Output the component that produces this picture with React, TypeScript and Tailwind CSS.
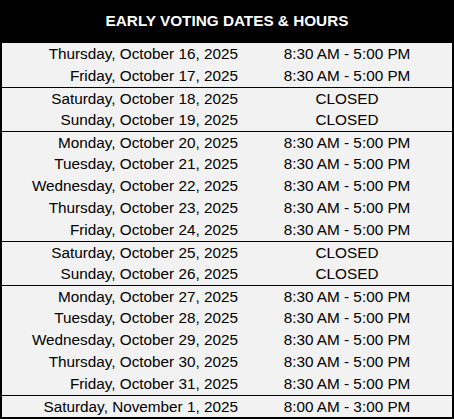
const GROUPS: [string, string][][] = [
  [
    ["Thursday, October 16, 2025", "8:30 AM - 5:00 PM"],
    ["Friday, October 17, 2025", "8:30 AM - 5:00 PM"],
  ],
  [
    ["Saturday, October 18, 2025", "CLOSED"],
    ["Sunday, October 19, 2025", "CLOSED"],
  ],
  [
    ["Monday, October 20, 2025", "8:30 AM - 5:00 PM"],
    ["Tuesday, October 21, 2025", "8:30 AM - 5:00 PM"],
    ["Wednesday, October 22, 2025", "8:30 AM - 5:00 PM"],
    ["Thursday, October 23, 2025", "8:30 AM - 5:00 PM"],
    ["Friday, October 24, 2025", "8:30 AM - 5:00 PM"],
  ],
  [
    ["Saturday, October 25, 2025", "CLOSED"],
    ["Sunday, October 26, 2025", "CLOSED"],
  ],
  [
    ["Monday, October 27, 2025", "8:30 AM - 5:00 PM"],
    ["Tuesday, October 28, 2025", "8:30 AM - 5:00 PM"],
    ["Wednesday, October 29, 2025", "8:30 AM - 5:00 PM"],
    ["Thursday, October 30, 2025", "8:30 AM - 5:00 PM"],
    ["Friday, October 31, 2025", "8:30 AM - 5:00 PM"],
  ],
  [["Saturday, November 1, 2025", "8:00 AM - 3:00 PM"]],
];

export default function App() {
  return (
    <div className="w-[454px] h-[419px] bg-black font-['Liberation_Sans',Arial,sans-serif] text-[15.3px] text-black">
      {/* Title bar */}
      <div className="h-[43px] flex items-center justify-center text-white font-bold">
        EARLY VOTING DATES &amp; HOURS
      </div>

      {/* Schedule */}
      <div className="mx-[2px] bg-[#f2f2f2]">
        {GROUPS.map((group, gi) => (
          <div key={gi} className={gi > 0 ? "border-t border-black" : ""}>
            {group.map(([day, hours], ri) => (
              <div
                key={day}
                className={`grid grid-cols-[240px_1fr] items-center leading-none ${
                  gi > 0 && ri === 0 ? "h-[21px]" : "h-[22px]"
                }`}
              >
                <span className="text-right pr-1">{day}</span>
                <span className="text-center">{hours}</span>
              </div>
            ))}
          </div>
        ))}
      </div>
    </div>
  );
}
